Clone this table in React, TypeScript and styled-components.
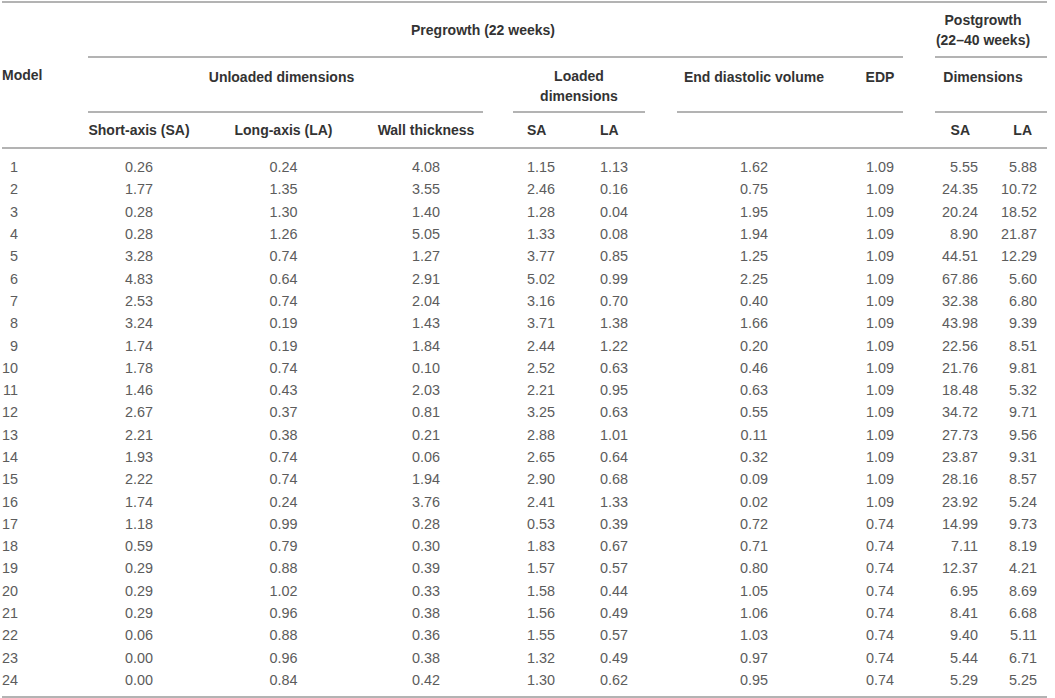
import React from 'react';
import styled, { createGlobalStyle } from 'styled-components';

const GlobalStyle = createGlobalStyle`
  html, body { margin: 0; padding: 0; background: #ffffff; }
  body { font-family: "Liberation Sans", Arial, Helvetica, sans-serif; }
`;

const COLS = '86px 102px 187px 98px 52px 73px 83px 142px 30px 50px 30px 43px 59px 10px';
const RULE = '#b3b3b3';

const Wrapper = styled.div`
  width: 1045px;
  margin: 1px 0 0 2px;
`;

const Header = styled.div`
  display: grid;
  grid-template-columns: ${COLS};
  grid-template-rows: 53px 2px 53px 2px 34px;
  border-top: 2px solid ${RULE};
  border-bottom: 2px solid ${RULE};
  font-weight: 700;
  font-size: 14px;
  color: #333333;
`;

type Align = 'left' | 'center' | 'right';

const HeadCell = styled.div<{
  $col: string;
  $row: string;
  $align?: Align;
  $valign?: 'start' | 'center';
  $pt?: number;
  $pr?: number;
}>`
  grid-column: ${(p) => p.$col};
  grid-row: ${(p) => p.$row};
  text-align: ${(p) => p.$align ?? 'center'};
  align-self: ${(p) => p.$valign ?? 'center'};
  padding-top: ${(p) => p.$pt ?? 0}px;
  padding-right: ${(p) => p.$pr ?? 0}px;
  line-height: 20px;
  white-space: nowrap;
`;

const Rule = styled.div<{ $col: string; $row: string; $ml?: number; $mr?: number }>`
  grid-column: ${(p) => p.$col};
  grid-row: ${(p) => p.$row};
  margin-left: ${(p) => p.$ml ?? 0}px;
  margin-right: ${(p) => p.$mr ?? 0}px;
  background: ${RULE};
`;

const Body = styled.div`
  padding: 7px 0 5px;
  border-bottom: 2px solid ${RULE};
  font-size: 14.4px;
  color: #5c5c5c;
`;

const Row = styled.div`
  display: grid;
  grid-template-columns: ${COLS};
  height: 22.3px;
  align-items: center;
`;

const Cell = styled.div<{ $col: number; $align: Align; $pr?: number }>`
  grid-column: ${(p) => p.$col};
  text-align: ${(p) => p.$align};
  padding-right: ${(p) => p.$pr ?? 0}px;
  white-space: nowrap;
`;

const ModelNum = styled.span`
  display: inline-block;
  width: 16px;
  text-align: right;
`;

const data: string[][] = [
  ['0.26', '0.24', '4.08', '1.15', '1.13', '1.62', '1.09', '5.55', '5.88'],
  ['1.77', '1.35', '3.55', '2.46', '0.16', '0.75', '1.09', '24.35', '10.72'],
  ['0.28', '1.30', '1.40', '1.28', '0.04', '1.95', '1.09', '20.24', '18.52'],
  ['0.28', '1.26', '5.05', '1.33', '0.08', '1.94', '1.09', '8.90', '21.87'],
  ['3.28', '0.74', '1.27', '3.77', '0.85', '1.25', '1.09', '44.51', '12.29'],
  ['4.83', '0.64', '2.91', '5.02', '0.99', '2.25', '1.09', '67.86', '5.60'],
  ['2.53', '0.74', '2.04', '3.16', '0.70', '0.40', '1.09', '32.38', '6.80'],
  ['3.24', '0.19', '1.43', '3.71', '1.38', '1.66', '1.09', '43.98', '9.39'],
  ['1.74', '0.19', '1.84', '2.44', '1.22', '0.20', '1.09', '22.56', '8.51'],
  ['1.78', '0.74', '0.10', '2.52', '0.63', '0.46', '1.09', '21.76', '9.81'],
  ['1.46', '0.43', '2.03', '2.21', '0.95', '0.63', '1.09', '18.48', '5.32'],
  ['2.67', '0.37', '0.81', '3.25', '0.63', '0.55', '1.09', '34.72', '9.71'],
  ['2.21', '0.38', '0.21', '2.88', '1.01', '0.11', '1.09', '27.73', '9.56'],
  ['1.93', '0.74', '0.06', '2.65', '0.64', '0.32', '1.09', '23.87', '9.31'],
  ['2.22', '0.74', '1.94', '2.90', '0.68', '0.09', '1.09', '28.16', '8.57'],
  ['1.74', '0.24', '3.76', '2.41', '1.33', '0.02', '1.09', '23.92', '5.24'],
  ['1.18', '0.99', '0.28', '0.53', '0.39', '0.72', '0.74', '14.99', '9.73'],
  ['0.59', '0.79', '0.30', '1.83', '0.67', '0.71', '0.74', '7.11', '8.19'],
  ['0.29', '0.88', '0.39', '1.57', '0.57', '0.80', '0.74', '12.37', '4.21'],
  ['0.29', '1.02', '0.33', '1.58', '0.44', '1.05', '0.74', '6.95', '8.69'],
  ['0.29', '0.96', '0.38', '1.56', '0.49', '1.06', '0.74', '8.41', '6.68'],
  ['0.06', '0.88', '0.36', '1.55', '0.57', '1.03', '0.74', '9.40', '5.11'],
  ['0.00', '0.96', '0.38', '1.32', '0.49', '0.97', '0.74', '5.44', '6.71'],
  ['0.00', '0.84', '0.42', '1.30', '0.62', '0.95', '0.74', '5.29', '5.25'],
];

const bodyCols: { col: number; align: Align }[] = [
  { col: 2, align: 'center' },
  { col: 3, align: 'center' },
  { col: 4, align: 'center' },
  { col: 6, align: 'left' },
  { col: 7, align: 'left' },
  { col: 8, align: 'center' },
  { col: 10, align: 'center' },
  { col: 12, align: 'right' },
  { col: 13, align: 'right' },
];

export default function App() {
  return (
    <>
      <GlobalStyle />
      <Wrapper>
        <Header>
          <HeadCell $col="1" $row="1 / 6" $align="left">Model</HeadCell>
          <HeadCell $col="2 / 11" $row="1" $pr={27}>Pregrowth (22 weeks)</HeadCell>
          <HeadCell $col="12 / 15" $row="1" $pr={16}>
            Postgrowth
            <br />
            (22–40 weeks)
          </HeadCell>

          <Rule $col="2 / 11" $row="2" $mr={2} />
          <Rule $col="12 / 15" $row="2" />

          <HeadCell $col="2 / 5" $row="3" $valign="start" $pt={9}>Unloaded dimensions</HeadCell>
          <HeadCell $col="5 / 8" $row="3" $valign="start" $pt={8}>
            Loaded
            <br />
            dimensions
          </HeadCell>
          <HeadCell $col="8" $row="3" $valign="start" $pt={9}>End diastolic volume</HeadCell>
          <HeadCell $col="10" $row="3" $valign="start" $pt={9}>EDP</HeadCell>
          <HeadCell $col="12 / 15" $row="3" $valign="start" $pt={9} $pr={16}>Dimensions</HeadCell>

          <Rule $col="2 / 6" $row="4" $mr={44} />
          <Rule $col="5 / 8" $row="4" $ml={38} $mr={38} />
          <Rule $col="7 / 11" $row="4" $ml={77} $mr={2} />
          <Rule $col="12 / 15" $row="4" />

          <HeadCell $col="2" $row="5">Short-axis (SA)</HeadCell>
          <HeadCell $col="3" $row="5">Long-axis (LA)</HeadCell>
          <HeadCell $col="4" $row="5">Wall thickness</HeadCell>
          <HeadCell $col="6" $row="5" $align="left">SA</HeadCell>
          <HeadCell $col="7" $row="5" $align="left">LA</HeadCell>
          <HeadCell $col="12" $row="5" $align="right" $pr={8}>SA</HeadCell>
          <HeadCell $col="13" $row="5" $align="right" $pr={5}>LA</HeadCell>
        </Header>
        <Body>
          {data.map((vals, i) => (
            <Row key={i}>
              <Cell $col={1} $align="left">
                <ModelNum>{i + 1}</ModelNum>
              </Cell>
              {vals.map((v, j) => (
                <Cell key={j} $col={bodyCols[j].col} $align={bodyCols[j].align}>
                  {v}
                </Cell>
              ))}
            </Row>
          ))}
        </Body>
      </Wrapper>
    </>
  );
}
